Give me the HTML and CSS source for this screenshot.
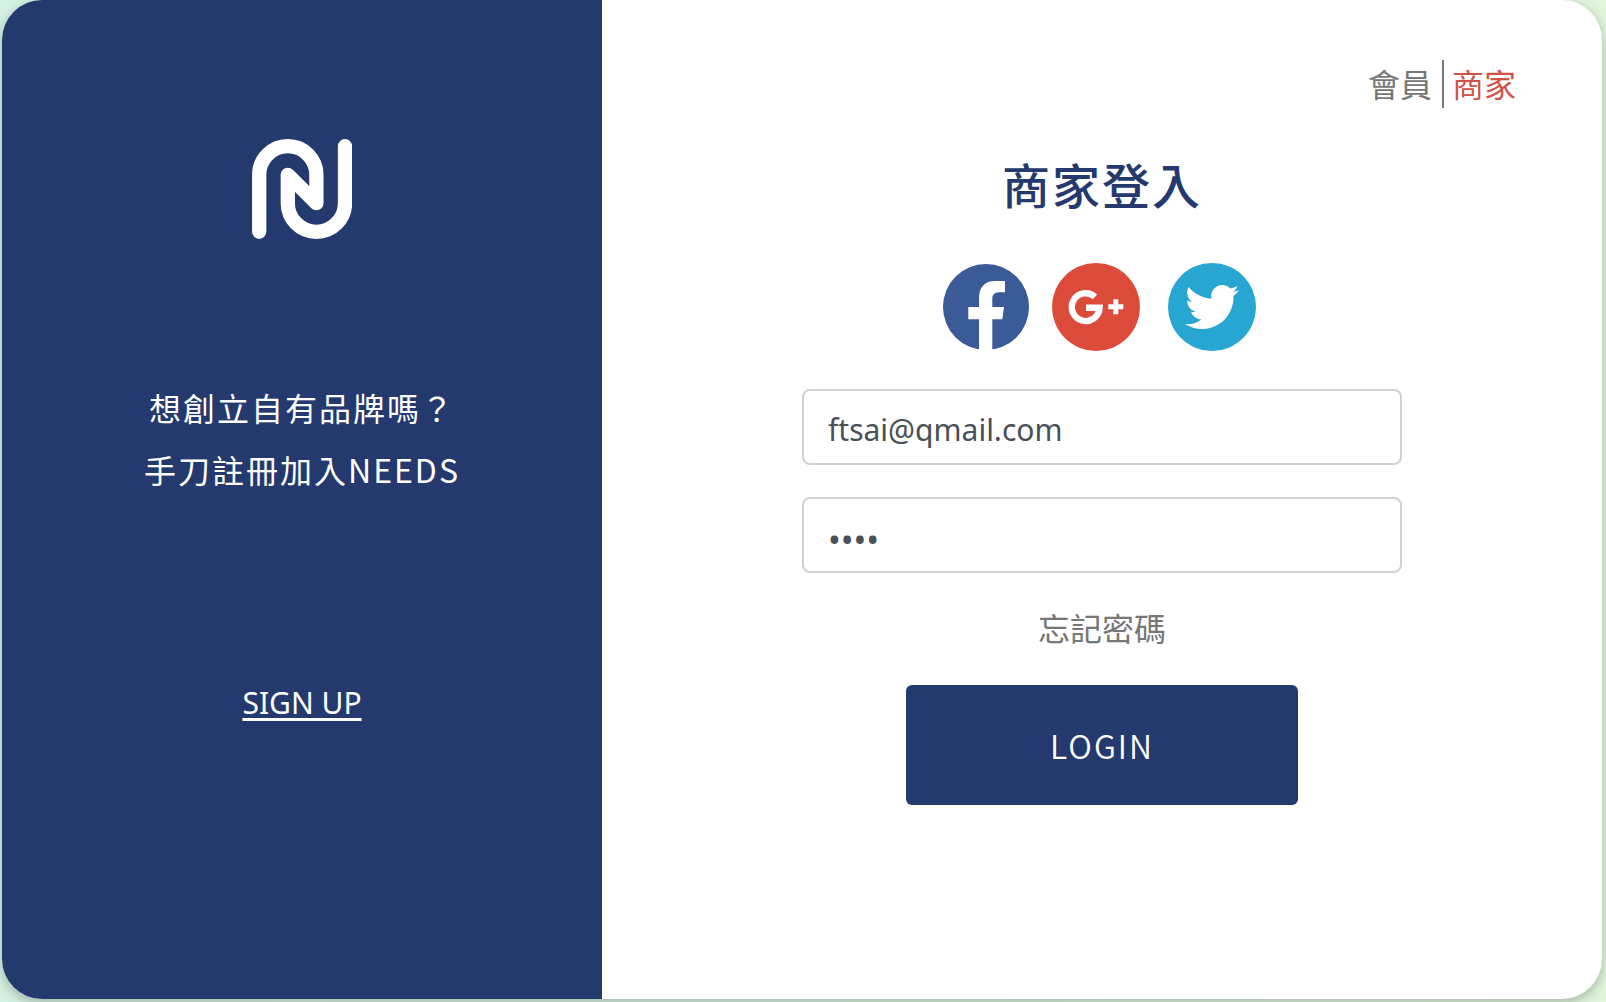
FILE: index.html
```html
<!DOCTYPE html>
<html lang="zh-Hant">
<head>
<meta charset="utf-8">
<meta name="viewport" content="width=device-width, initial-scale=1">
<title>商家登入</title>
<link rel="stylesheet" href="styles.css">
</head>
<body>
<main class="card">
  <aside class="promo">
    <svg class="logo" viewBox="0 0 100 100" role="img" aria-label="NEEDS">
      <path d="M7.2 92.8V35.8A28.6 28.6 0 0 1 64.4 35.8V64.2L35.8 35.8V64.2A28.6 28.6 0 0 0 93 64.2V7.2"/>
    </svg>
    <p class="pitch">想創立自有品牌嗎？<br>手刀註冊加入NEEDS</p>
    <a class="signup" href="#">SIGN UP</a>
  </aside>
  <section class="login">
    <nav class="roles">
      <a class="role" href="#">會員</a>
      <a class="role active" href="#">商家</a>
    </nav>
    <form class="form">
      <h1 class="title">商家登入</h1>
      <div class="social">
        <a href="#" aria-label="Facebook"><svg width="88" height="88" viewBox="0 0 88 88">
          <circle cx="44" cy="44" r="43" fill="#3b5a98"/>
          <path fill="#fff" d="M37 88V56.3H26.3V44H37V35C37 24 43 18 53 18H63V29.3H57.500C52.500 29.300 50.300 31.500 50.300 36V44H62L60.300 56.300H50.300V88z"/>
        </svg></a>
        <a href="#" aria-label="Google+"><svg width="94" height="88" viewBox="0 0 94 88">
          <circle cx="44" cy="44" r="44" fill="#dc4b3a"/>
          <path fill="none" stroke="#fff" stroke-width="6.400" d="M43 33.800A13.900 13.900 0 1 0 47.600 44.700H34"/>
          <path fill="none" stroke="#fff" stroke-width="5" d="M56.300 43.800H71.300M63.800 36.300V51.300"/>
        </svg></a>
        <a href="#" aria-label="Twitter"><svg width="94" height="88" viewBox="0 0 94 88">
          <circle cx="44" cy="44" r="44" fill="#28a6d2"/>
          <path fill="#fff" transform="translate(17 17) scale(2.25)" d="M23.954 4.569c-.885.389-1.83.654-2.825.775 1.014-.611 1.794-1.574 2.163-2.723-.951.555-2.005.959-3.127 1.184-.896-.959-2.173-1.559-3.591-1.559-2.717 0-4.92 2.203-4.92 4.917 0 .39.045.765.127 1.124C7.691 8.094 4.066 6.13 1.64 3.161c-.427.722-.666 1.561-.666 2.475 0 1.71.87 3.213 2.188 4.096-.807-.026-1.566-.248-2.228-.616v.061c0 2.385 1.693 4.374 3.946 4.827-.413.111-.849.171-1.296.171-.314 0-.615-.03-.916-.086.631 1.953 2.445 3.377 4.604 3.417-1.68 1.319-3.809 2.105-6.102 2.105-.39 0-.779-.023-1.17-.067 2.189 1.394 4.768 2.209 7.557 2.209 9.054 0 13.999-7.496 13.999-13.986 0-.209 0-.42-.015-.63.961-.689 1.8-1.56 2.46-2.548l-.047-.02z"/>
        </svg></a>
      </div>
      <input class="field" type="email" aria-label="Email" value="ftsai@qmail.com">
      <input class="field secret" type="password" aria-label="Password" value="1234">
      <a class="forgot" href="#">忘記密碼</a>
      <button class="submit" type="button">LOGIN</button>
    </form>
  </section>
</main>
</body>
</html>
```
FILE: styles.css
```css
* {
  box-sizing: border-box;
}

body {
  margin: 0;
  min-height: 100vh;
  display: flex;
  padding: 0 4px 3px 2px;
  background: linear-gradient(to right, #d4f1e3, #e0f5dc);
  font-family: "Noto Sans CJK TC", sans-serif;
  font-size: 32px;
}

.card {
  flex: 1;
  display: grid;
  grid-template-columns: 3fr 5fr;
  overflow: hidden;
  border-radius: 40px;
  background: #fff;
  box-shadow: 0 4px 12px rgba(0, 0, 0, 0.25);
}

.promo {
  display: flex;
  flex-direction: column;
  align-items: center;
  padding-top: 139px;
  background: #24396d;
  color: #fff;
}

.logo {
  width: 100px;
  height: 100px;
  fill: none;
  stroke: #fff;
  stroke-width: 14.3;
  stroke-linecap: round;
  stroke-linejoin: round;
}

.pitch {
  margin: 137px 0 179px;
  line-height: 62px;
  letter-spacing: 2px;
  text-align: center;
}

.signup {
  color: inherit;
  font-family: "Noto Sans", sans-serif;
  font-size: 30px;
  line-height: 48px;
  text-decoration-thickness: 3px;
  text-underline-offset: 4px;
}

.login {
  display: flex;
  flex-direction: column;
  padding: 60px 86px 0;
}

.roles {
  display: flex;
  justify-content: flex-end;
}

.role {
  padding: 0 10px 2px 0;
  color: #777;
  line-height: 46px;
  text-decoration: none;
}

.active {
  padding: 0 0 2px 8px;
  border-left: 2px solid #777;
  color: #cf5148;
}

.form {
  display: flex;
  flex-direction: column;
  align-items: center;
}

.title {
  margin: 39px 0 44px;
  color: #24396d;
  font-size: 48px;
  font-weight: 500;
  line-height: 72px;
  letter-spacing: 2px;
}

.social {
  display: flex;
  gap: 22px;
  margin-bottom: 38px;
}

.social svg {
  display: block;
}

.field {
  width: 100%;
  max-width: 600px;
  height: 76px;
  margin-bottom: 32px;
  padding: 4px 24px 0;
  border: 2px solid #ced2d7;
  border-radius: 8px;
  background: #fff;
  color: #495057;
  font-family: "Noto Sans", sans-serif;
  font-size: 30px;
}

.secret {
  margin-bottom: 30px;
  padding-top: 8px;
  font-size: 34px;
}

.forgot {
  color: #777;
  line-height: 48px;
  text-decoration: none;
}

.submit {
  width: 392px;
  height: 120px;
  margin-top: 34px;
  padding: 0;
  border: 0;
  border-radius: 6px;
  background: #24396d;
  color: #fff;
  font: 350 32px "Noto Sans CJK TC", sans-serif;
  letter-spacing: 2px;
}
```
